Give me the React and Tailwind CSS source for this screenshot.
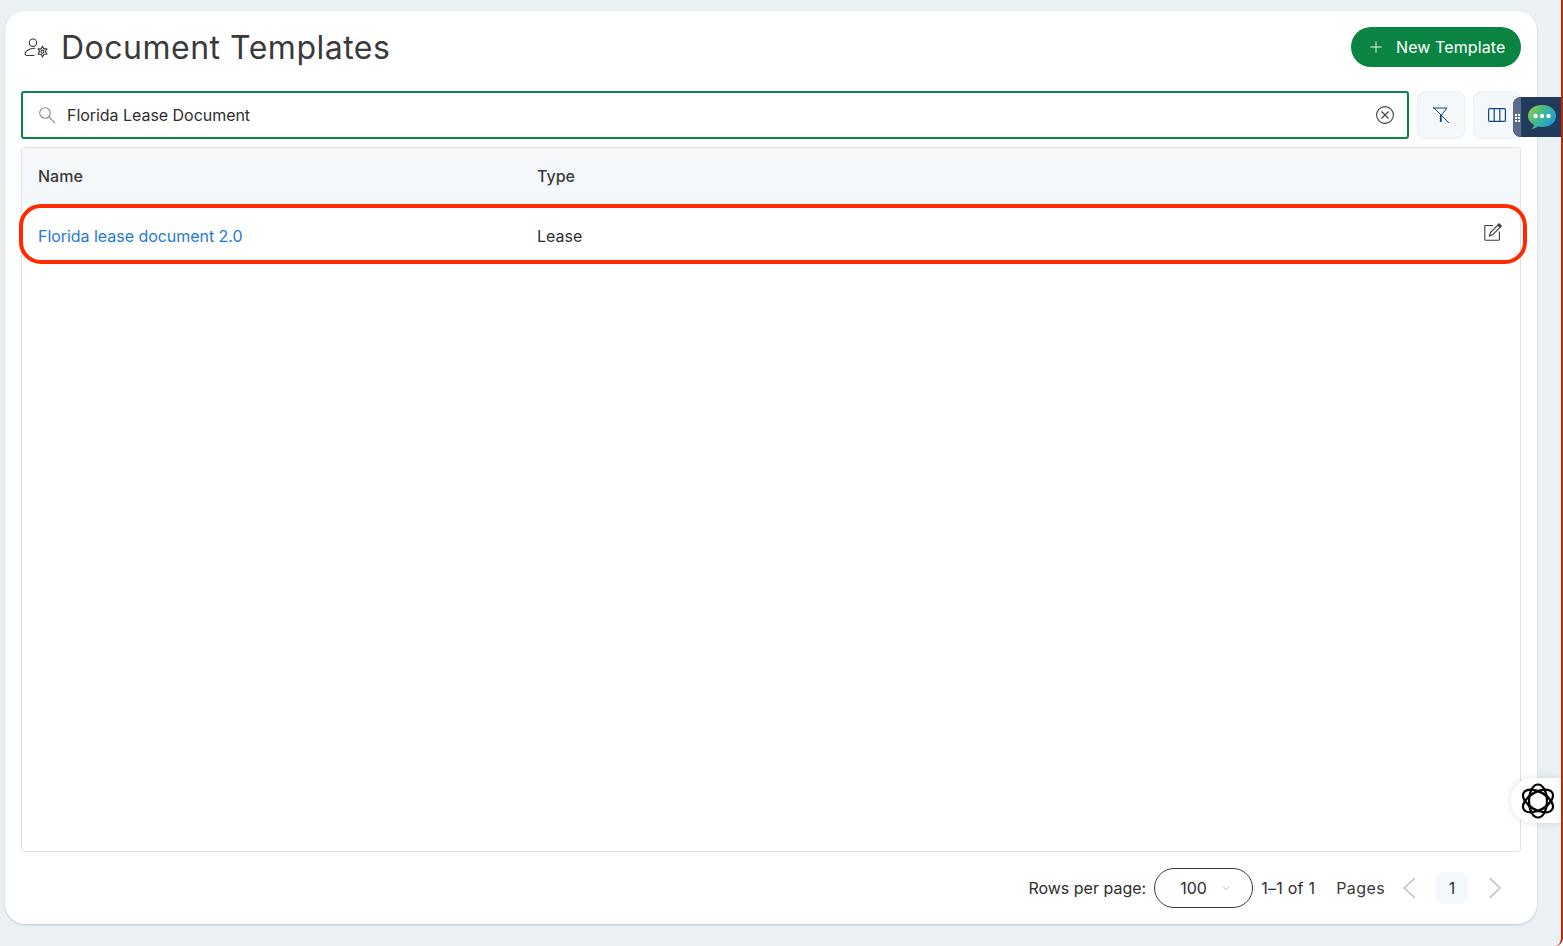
import { Plus, ChevronDown } from "lucide-react";

const UserGear = () => (
  <svg width="26" height="26" viewBox="0 0 26 26" fill="none" stroke="#3a3a3a" strokeWidth="1.100" strokeLinecap="round" strokeLinejoin="round">
    <circle cx="10" cy="8.700" r="3.700" />
    <path d="M12 14.200c-4 0-8.800 1.800-9.800 4.600-.3 1.400.4 2.700 1.800 2.700h7" />
    <path d="M19.500 12.300l1.400 2.600h3l-1.500 2.700 1.500 2.700h-3l-1.400 2.600-1.400-2.600h-3l1.500-2.700-1.500-2.700h3z" />
    <circle cx="19.500" cy="17.600" r="1.500" />
  </svg>
);

const SearchIcon = () => (
  <svg width="18" height="18" viewBox="0 0 18 18" fill="none" stroke="#8a8a8a" strokeWidth="1.100" strokeLinecap="round">
    <circle cx="7" cy="7" r="5.300" />
    <path d="M11 11l5.800 5.800" />
  </svg>
);

const FilterOff = () => (
  <svg width="20" height="20" viewBox="0 0 20 20" fill="none" stroke="#14477c" strokeWidth="1">
    <path d="M2 3h14l-5.500 7" />
    <path d="M2 2l16 16" />
    <path d="M9.800 9.500V17" strokeWidth="1.800" />
  </svg>
);

const Columns = () => (
  <svg width="18" height="14" viewBox="0 0 18 14" fill="none" stroke="#14477c" strokeWidth="1.200">
    <rect x=".6" y=".6" width="16.800" height="12.800" rx="1.200" />
    <path d="M6.200 1v12M11.800 1v12" />
  </svg>
);

const ClearCircle = () => (
  <svg width="20" height="20" viewBox="0 0 20 20" fill="none" stroke="#3f3f3f" strokeWidth="1.100">
    <circle cx="10" cy="10" r="8.400" />
    <path d="M6.500 6.500l7 7M13.500 6.500l-7 7" />
  </svg>
);

const EditIcon = () => (
  <svg width="20" height="20" viewBox="0 0 20 20" fill="none" stroke="#3f3f3f" strokeWidth="1.100">
    <path d="M10 3.500H2.600a.8.8 0 0 0-.8.8v13.100a.8.8 0 0 0 .8.8h13a.8.8 0 0 0 .8-.8V9.500" />
    <path d="M6.500 13.800l1-3.300 7.400-7.400 2.200 2.200-7.400 7.400z" />
    <path d="M15.200 1.800l3 3" strokeWidth="2.400" />
  </svg>
);

const Chevron = ({ flip }) => (
  <svg width="26" height="26" viewBox="0 0 26 26" fill="none" stroke="#b8b8b8" strokeWidth="1.200" strokeLinecap="round" strokeLinejoin="round">
    <path d={flip ? "M8 3.500L18 13 8 22.500" : "M18.500 3.500L8 13l10.500 9.500"} />
  </svg>
);

const ChatBubble = () => (
  <svg width="30" height="26" viewBox="0 0 30 26">
    <defs>
      <linearGradient id="chatFill" x1="0" y1="0" x2="1" y2="0.600">
        <stop offset="0" stopColor="#a0d03a" />
        <stop offset="0.500" stopColor="#45b98a" />
        <stop offset="1" stopColor="#1f9ad6" />
      </linearGradient>
    </defs>
    <path d="M15 1c8 0 14 4.600 14 11s-6 11-14 11c-1.500 0-3-.2-4.300-.5C9 24 6.500 25 4.500 25c1.300-1 2.300-2.500 2.500-4.200C3.500 18.800 1 15.700 1 12 1 5.600 7 1 15 1z" fill="url(#chatFill)" />
    <circle cx="8.500" cy="12" r="2.200" fill="#fff" />
    <circle cx="15" cy="12" r="2.200" fill="#fff" />
    <circle cx="21.500" cy="12" r="2.200" fill="#fff" />
  </svg>
);

const BotLogo = () => (
  <svg width="36" height="36" viewBox="0 0 36 36" fill="none" stroke="#000" strokeWidth="2.200">
    <ellipse cx="18" cy="18" rx="9" ry="16.500" />
    <ellipse cx="18" cy="18" rx="9" ry="16.500" transform="rotate(60 18 18)" />
    <ellipse cx="18" cy="18" rx="9" ry="16.500" transform="rotate(120 18 18)" />
    <path d="M18 7.500l9.100 5.250v10.500L18 28.500l-9.100-5.250v-10.500z" strokeWidth="1.800" />
  </svg>
);

export default function App() {
  return (
    <div className="relative h-[946px] overflow-hidden rounded-br-[8px] border-r-2 border-[#b52a0c] bg-[#ebf0f3] pl-[5px] pr-[24px] pt-[11px] text-[#2e2e2e] font-['Inter',sans-serif]">
      <div className="flex h-[913px] flex-col rounded-[20px] bg-white px-4 shadow-[0_1px_2px_rgba(120,150,180,0.45)]">
        {/* header */}
        <div className="flex h-[72px] shrink-0 items-center justify-between">
          <div className="flex items-center gap-[12px] pl-[2px]">
            <UserGear />
            <h1 className="pt-px text-[32px] leading-none font-normal tracking-[0.5px] text-[#3a3a3a]">Document Templates</h1>
          </div>
          <button className="flex h-10 w-[170px] items-center gap-[11px] rounded-full bg-[#0a8443] pl-[16px] text-base text-white">
            <Plus size={18} strokeWidth={1.2} />
            <span className="tracking-[0.1px]">New Template</span>
          </button>
        </div>

        {/* search + tools */}
        <div className="mt-2 flex gap-2">
          <div className="flex h-12 flex-1 items-center rounded-[3px] border-2 border-[#0a8443] pl-[15px] pr-[12px]">
            <SearchIcon />
            <span className="ml-[11px] flex-1 text-base tracking-[-0.04px] text-[#2e2e2e]">Florida Lease Document</span>
            <ClearCircle />
          </div>
          <button className="flex h-12 w-12 items-center justify-center rounded-lg border border-[#eceff2] bg-[#f5f8fb]">
            <FilterOff />
          </button>
          <button className="flex h-12 w-12 items-center justify-center rounded-lg border border-[#eceff2] bg-[#f5f8fb]">
            <Columns />
          </button>
        </div>

        {/* table */}
        <div className="mt-2 flex h-[705px] shrink-0 flex-col rounded-[3px] border border-[#dfe2e5]">
          <div className="flex h-[55px] items-center bg-[#f5f8fb] pl-4 text-base font-[450] text-[#3a3a3a]">
            <div className="w-[499px]">Name</div>
            <div>Type</div>
          </div>
          <div className="flex h-[66px] items-center pl-4 pr-[17px] text-base">
            <a className="w-[499px] tracking-[-0.04px] text-[#1f7ad0]">Florida lease document 2.0</a>
            <div className="flex-1">Lease</div>
            <span className="-mt-2"><EditIcon /></span>
          </div>
        </div>

        {/* pagination */}
        <div className="flex flex-1 items-center justify-end text-base text-[#2e2e2e]">
          <span>Rows per page:</span>
          <div className="ml-2 flex h-10 w-[99px] items-center rounded-full border border-[#3a3a3a] pl-[25px]">
            <span>100</span>
            <ChevronDown size={12} strokeWidth={1.2} className="ml-[13px] text-[#8a8a8a]" />
          </div>
          <span className="ml-2 tracking-[0.25px]">1–1 of 1</span>
          <span className="ml-[21px] tracking-[0.4px] text-[#3a3a3a]">Pages</span>
          <span className="ml-[11px]"><Chevron /></span>
          <span className="ml-[14px] flex h-8 w-8 items-center justify-center rounded-lg bg-[#f5f8fb]">1</span>
          <span className="ml-[14px] mr-[13px]"><Chevron flip /></span>
        </div>
      </div>

      {/* annotation drawn over the row */}
      <div className="absolute left-[19px] top-[204px] h-[59.500px] w-[1508px] rounded-[22px] border-4 border-[#ff2a00]" />

      {/* chat widget */}
      <div className="absolute left-[1513px] top-[97px] flex h-10 w-12 overflow-hidden rounded-l-lg bg-[#223a5c]">
        <div className="flex w-[8px] shrink-0 items-center justify-center bg-[#5a6b8c]" />
        <span className="absolute left-[2px] top-[17px] grid grid-cols-2 gap-px">
          <i className="h-[2px] w-[2px] bg-white" /><i className="h-[2px] w-[2px] bg-white" />
          <i className="h-[2px] w-[2px] bg-white" /><i className="h-[2px] w-[2px] bg-white" />
          <i className="h-[2px] w-[2px] bg-white" /><i className="h-[2px] w-[2px] bg-white" />
        </span>
        <span className="ml-[6px] mt-[7px]"><ChatBubble /></span>
      </div>

      {/* assistant launcher */}
      <div className="absolute left-[1511px] top-[778px] flex h-[45px] w-[50px] items-center rounded-l-[22px] bg-white pl-[9px] shadow-[0_0_8px_rgba(0,0,0,0.12)]">
        <BotLogo />
      </div>
    </div>
  );
}
